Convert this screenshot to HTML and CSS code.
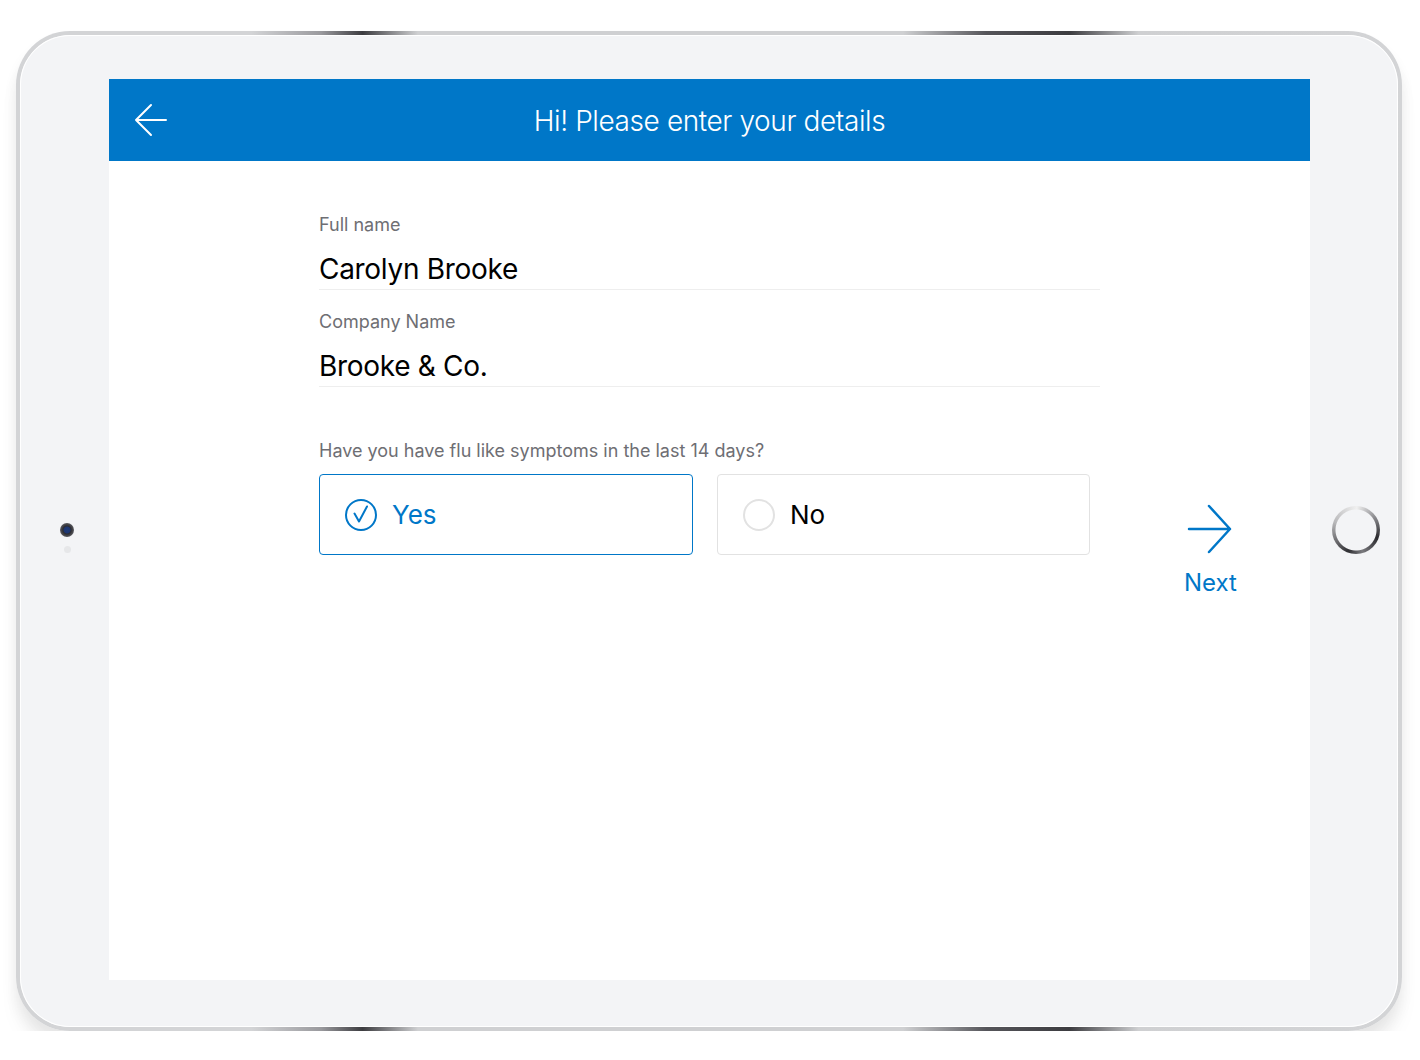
FILE: index.html
```html
<!DOCTYPE html>
<html>
<head>
    <title>Visitor Sign In - Details</title>
    <link rel="stylesheet" href="styles.css">
</head>
<body>
    <div class="device">
        <div class="bezel">
            <div class="side side-left">
                <div class="camera"></div>
                <div class="sensor"></div>
            </div>

            <div class="screen">
                <div class="app-bar">
                    <button class="back-button" type="button">
                        <svg width="34" height="34" viewBox="0 0 34 34">
                            <path d="M3 17 H33 M18 2 L3 17 L18 32" fill="none" stroke="#fff" stroke-width="2" stroke-linecap="round" stroke-linejoin="round"/>
                        </svg>
                    </button>
                    <h1 class="title">Hi! Please enter your details</h1>
                </div>

                <div class="content">
                    <form class="details-form">
                        <div class="field">
                            <label class="field-label">Full name</label>
                            <div class="field-value">Carolyn Brooke</div>
                        </div>
                        <div class="field">
                            <label class="field-label">Company Name</label>
                            <div class="field-value">Brooke &amp; Co.</div>
                        </div>

                        <div class="question">Have you have flu like symptoms in the last 14 days?</div>
                        <div class="question-row">
                            <div class="choices">
                                <div class="choice choice-selected">
                                    <svg width="34" height="34" viewBox="0 0 34 34">
                                        <circle cx="17" cy="17" r="15" fill="none" stroke="#0077c8" stroke-width="2"/>
                                        <path d="M10.5 15.5 L15 23.5 L23 8.5" fill="none" stroke="#0077c8" stroke-width="2" stroke-linecap="round" stroke-linejoin="round"/>
                                    </svg>
                                    <span>Yes</span>
                                </div>
                                <div class="choice">
                                    <svg width="34" height="34" viewBox="0 0 34 34">
                                        <circle cx="17" cy="17" r="15" fill="none" stroke="#e2e2e2" stroke-width="2"/>
                                    </svg>
                                    <span>No</span>
                                </div>
                            </div>
                            <button class="next-button" type="button">
                                <svg width="46" height="50" viewBox="0 0 46 50">
                                    <path d="M2 25 H43 M22 2 L43 25 L22 48" fill="none" stroke="#0077c8" stroke-width="2.5" stroke-linecap="round" stroke-linejoin="round"/>
                                </svg>
                                <span>Next</span>
                            </button>
                        </div>
                    </form>
                </div>
            </div>

            <div class="side side-right">
                <div class="home-button"></div>
            </div>
        </div>
    </div>
</body>
</html>
```
FILE: styles.css
```css
body {
    margin: 0;
    padding: 31px 18px 0 16px;
    background-color: white;
    font-family: Inter, "Noto Sans", sans-serif;
    overflow: hidden;
}

.device {
    width: 1386px;
    height: 1000px;
    box-sizing: border-box;
    padding: 4px;
    border-radius: 54px;
    background: linear-gradient(90deg, #d3d4d6 0%, #d3d4d6 17%, #9a9a9e 22%, #3c3c40 25%, #cfd0d2 29%, #cfd0d2 64%, #55555a 70%, #3c3c40 76%, #cfd0d2 81%, #d3d4d6 100%);
    box-shadow: 0 10px 14px rgba(0, 0, 0, 0.07), 0 22px 20px rgba(0, 0, 0, 0.04);
}

.bezel {
    display: flex;
    height: 100%;
    box-sizing: border-box;
    padding: 44px 0 47px 0;
    border-radius: 50px;
    background-color: #f3f4f6;
    box-shadow: inset 0 0 0 1px #ffffff;
}

.side {
    display: flex;
    flex-direction: column;
    align-items: center;
    justify-content: center;
}

.side-left {
    width: 89px;
    padding: 17px 0 0 5px;
    box-sizing: border-box;
}

.side-right {
    width: 88px;
    padding-left: 4px;
    box-sizing: border-box;
}

.camera {
    width: 14px;
    height: 14px;
    border-radius: 50%;
    background: radial-gradient(circle, #1d3a78 0, #1d3570 3px, #2c2c30 4px, #5a5a60 7px);
}

.sensor {
    width: 7px;
    height: 7px;
    margin-top: 9px;
    border-radius: 50%;
    background-color: #e6e7e9;
}

.home-button {
    width: 48px;
    height: 48px;
    border-radius: 50%;
    background: radial-gradient(circle, #f3f4f6 20px, transparent 21px),
                conic-gradient(from 200deg, #2f2f33, #b8b8ba 25%, #f0f0f0 45%, #8a8a8e 60%, #2a2a2e 75%, #7a7a7e 90%, #2f2f33);
}

.screen {
    width: 1201px;
    display: flex;
    flex-direction: column;
    background-color: white;
}

.app-bar {
    position: relative;
    height: 82px;
    box-sizing: border-box;
    padding-top: 2px;
    background-color: #0077c8;
    display: flex;
    align-items: center;
    justify-content: center;
}

.back-button {
    position: absolute;
    left: 24px;
    top: 24px;
    padding: 0;
    border: none;
    background: none;
    cursor: pointer;
}

.back-button svg {
    display: block;
}

.title {
    margin: 0;
    color: white;
    font-size: 28px;
    font-weight: 300;
    letter-spacing: -0.4px;
}

.content {
    padding: 53px 0 0 210px;
}

.details-form {
    width: 781px;
}

.field {
    margin-bottom: 21px;
    border-bottom: 1px solid #eeeeee;
}

.field-label {
    display: block;
    font-size: 18px;
    line-height: 22px;
    color: #6e6e73;
}

.field-value {
    margin-top: 15px;
    padding-bottom: 2px;
    font-size: 28px;
    line-height: 36px;
    color: #000000;
    letter-spacing: -0.3px;
}

.question {
    margin-top: 53px;
    font-size: 18px;
    line-height: 22px;
    color: #6e6e73;
}

.question-row {
    display: flex;
    margin-top: 12px;
    width: 1000px;
}

.choices {
    display: flex;
    gap: 24px;
}

.choice {
    display: flex;
    align-items: center;
    gap: 14px;
    width: 373px;
    height: 81px;
    box-sizing: border-box;
    padding-left: 24px;
    border: 1px solid #e2e2e2;
    border-radius: 4px;
    font-size: 26px;
    color: #000000;
}

.choice svg {
    display: block;
}

.choice-selected {
    width: 374px;
    border-color: #0077c8;
    color: #0077c8;
}

.next-button {
    display: flex;
    flex-direction: column;
    align-items: center;
    margin: 30px 0 0 94px;
    padding: 0;
    border: none;
    background: none;
    cursor: pointer;
    color: #0077c8;
    font-family: Inter, "Noto Sans", sans-serif;
    font-size: 24px;
}

.next-button svg {
    display: block;
    margin-bottom: 14px;
}
```
